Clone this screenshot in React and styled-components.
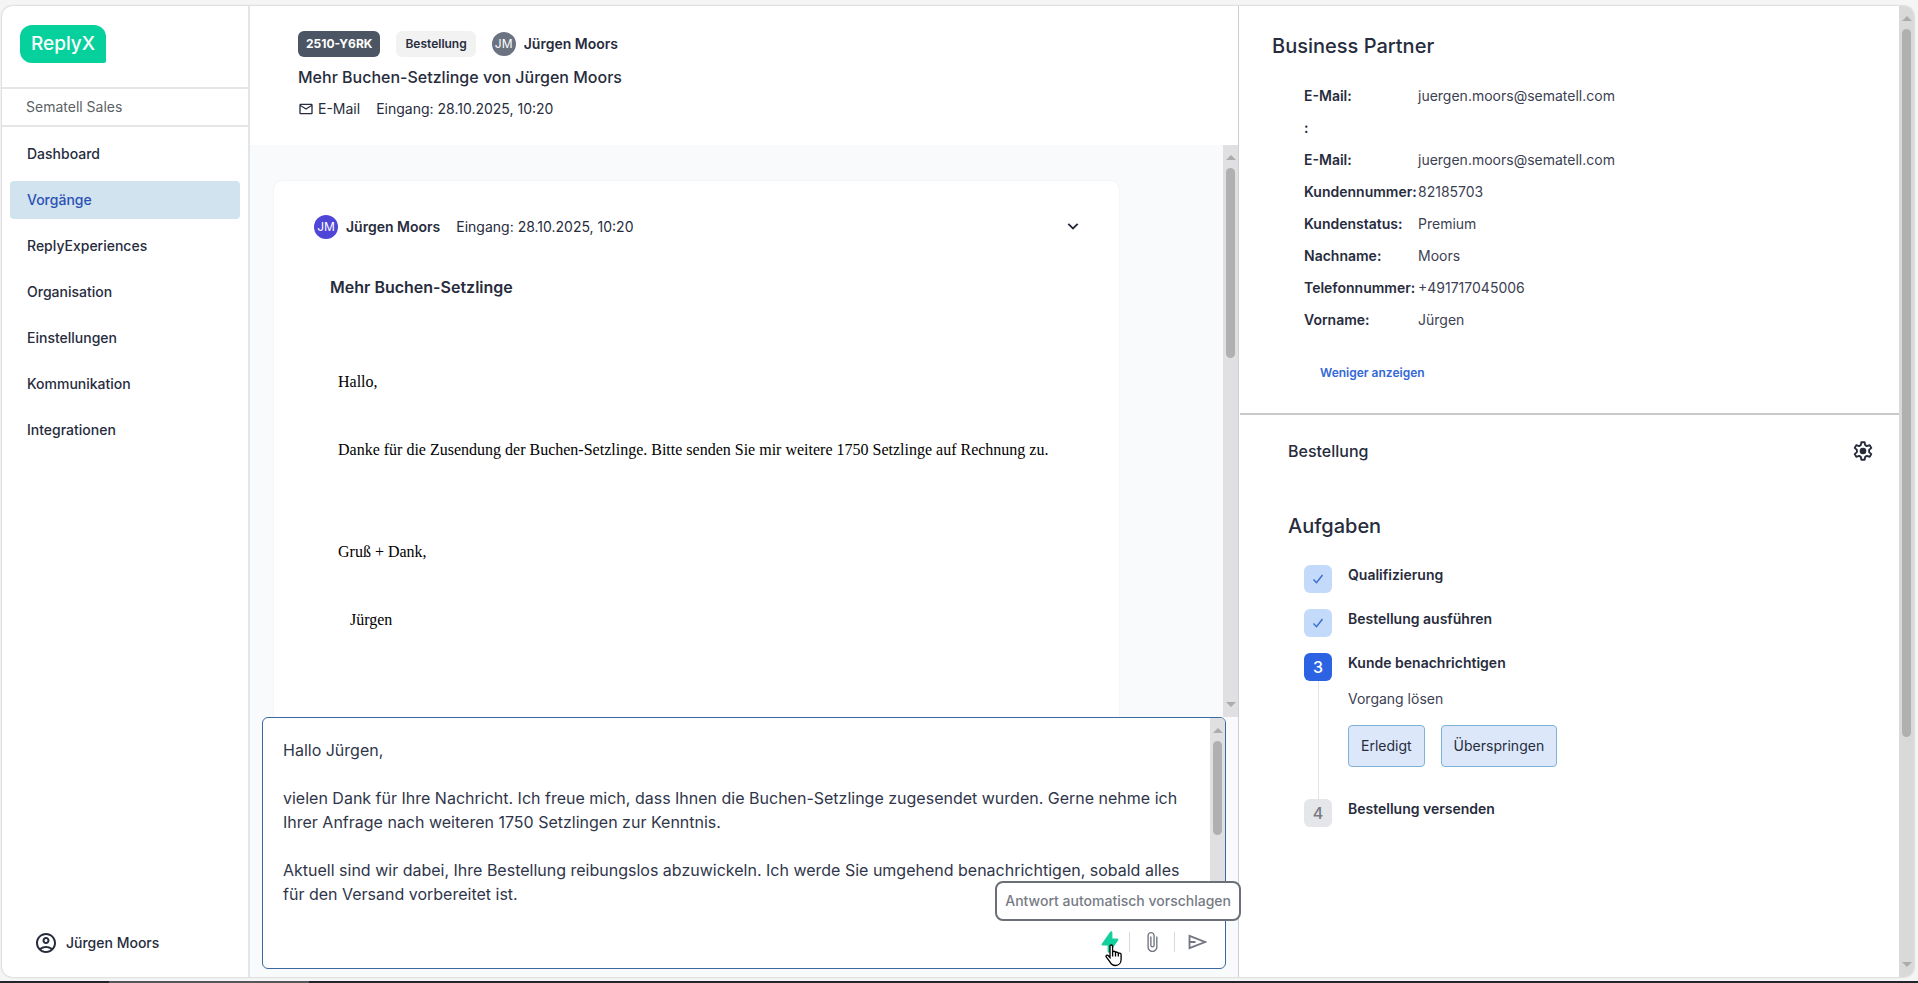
import React from 'react';
import styled, { createGlobalStyle, css } from 'styled-components';
import { HiLightningBolt } from 'react-icons/hi';
import {
  MdMailOutline,
  MdOutlineAccountCircle,
  MdOutlineAttachFile,
} from 'react-icons/md';

const GlobalStyle = createGlobalStyle`
  * {
    box-sizing: border-box;
  }
  body {
    margin: 0;
    background-color: #f5f5f5;
    color: #272c3d;
    font-family: Inter, "Liberation Sans", sans-serif;
    font-size: 14px;
    line-height: 20px;
  }
  h1, h2, h3, p, dl, dd, ol, ul {
    margin: 0;
    padding: 0;
  }
  ul, ol {
    list-style: none;
  }
  button {
    font: inherit;
    color: inherit;
    cursor: pointer;
  }
`;

const Page = styled.div`
  display: flex;
  flex-direction: column;
  height: 100vh;
`;
const Frame = styled.div`
  flex: 1;
  min-height: 0;
  margin: 6px 4px 4px 2px;
  display: grid;
  grid-template-columns: 248px minmax(0, 988fr) minmax(0, 676fr);
  border-radius: 10px;
  background-color: #fff;
  box-shadow: 0 0 2px rgba(0, 0, 0, 0.3);
  overflow: hidden;
`;
const Taskbar = styled.div`
  height: 2px;
  padding-left: 109px;
  background-color: #23252b;
`;
const TaskbarItem = styled.div`
  width: 200px;
  height: 2px;
  background-color: #55565a;
`;

/* sidebar */
const Sidebar = styled.aside`
  display: flex;
  flex-direction: column;
  border-right: 2px solid #e4e5e7;
`;
const LogoArea = styled.div`
  height: 83px;
  padding: 19px 18px 0;
  border-bottom: 2px solid #e4e5e7;
`;
const Logo = styled.div`
  display: flex;
  align-items: center;
  justify-content: center;
  width: 86px;
  height: 38px;
  border-radius: 12px 12px 2px 12px;
  background-color: #06d09c;
  color: #fff;
  font-size: 19px;
  font-weight: 500;
`;
const Tenant = styled.div`
  height: 38px;
  padding: 8px 24px;
  border-bottom: 2px solid #e4e5e7;
  color: #5b5f66;
`;
const Menu = styled.ul`
  display: flex;
  flex: 1;
  flex-direction: column;
  gap: 8px;
  padding: 8px;
`;
const MenuLink = styled.a`
  display: block;
  padding: 9px 17px;
  border-radius: 4px;
  font-weight: 500;
  text-decoration: none;
  color: ${({ $active }) => ($active ? '#2b50b5' : '#272c3d')};
  background-color: ${({ $active }) => ($active ? '#d1e3ee' : 'transparent')};
`;
const UserLink = styled.a`
  display: flex;
  align-items: center;
  gap: 8px;
  padding: 0 32px 22px;
  font-weight: 500;
  text-decoration: none;
  color: #272c3d;
`;

/* ticket */
const Ticket = styled.main`
  display: flex;
  flex-direction: column;
  min-height: 0;
  background-color: #f8fafc;
`;
const TicketHeader = styled.header`
  display: flex;
  flex-direction: column;
  height: 139px;
  padding: 25px 48px 0;
  background-color: #fff;
`;
const Row = styled.div`
  display: flex;
  align-items: center;
  gap: ${({ $gap }) => $gap || 16}px;
`;
const Badge = styled.span`
  height: 26px;
  padding: 0 9px;
  border-radius: 6px;
  font-size: 12px;
  font-weight: 600;
  line-height: 26px;
  background-color: #f2f2f3;
  ${({ $dark }) =>
    $dark &&
    css`
      padding: 0 8px;
      background-color: #4b5563;
      color: #fff;
      font-weight: 700;
    `}
`;
const Avatar = styled.span`
  display: flex;
  align-items: center;
  justify-content: center;
  width: 24px;
  height: 24px;
  border-radius: 50%;
  background-color: ${({ $color }) => $color};
  color: #fff;
  font-size: 12px;
`;
const PersonName = styled.span`
  font-weight: 600;
`;
const TicketTitle = styled.h1`
  margin: 8px 0 10px;
  font-size: 16px;
  font-weight: 500;
  line-height: 24px;
`;
const Conversation = styled.section`
  display: flex;
  flex: 1;
  min-height: 0;
`;
const Messages = styled.div`
  flex: 1;
  padding: 36px 104px 0 24px;
  overflow: hidden;
`;
const Message = styled.article`
  min-height: 600px;
  padding: 34px 36px 0 40px;
  border-radius: 8px;
  background-color: #fff;
  box-shadow: 0 0 2px rgba(0, 0, 0, 0.08);
`;
const MessageToggle = styled.button`
  display: flex;
  margin-left: auto;
  padding: 4px;
  border: none;
  background-color: transparent;
`;
const Subject = styled.h2`
  margin: 36px 16px 66px;
  font-size: 16px;
  font-weight: 600;
  line-height: 24px;
`;
const MailBody = styled.div`
  padding: 0 24px;
  color: #000;
  font-family: "Liberation Serif", serif;
  font-size: 16px;
  line-height: 34px;
  p {
    margin-bottom: 34px;
  }
  p.closing {
    margin-top: 68px;
  }
  p.signature {
    padding-left: 12px;
  }
`;

/* scrollbar */
const Track = styled.div`
  display: flex;
  flex-direction: column;
  align-items: center;
  flex: none;
  width: 15px;
  padding: 10px 0;
  background-color: ${({ $color }) => $color || '#e0e0e2'};
`;
const Arrow = styled.span`
  border: 5px solid transparent;
  ${({ $down }) =>
    $down
      ? 'margin-top: auto; border-bottom: none; border-top-color: #acacac;'
      : 'border-top: none; border-bottom-color: #acacac;'}
`;
const Thumb = styled.div`
  width: 9px;
  margin-top: 8px;
  border-radius: 5px;
  background-color: #b0b0b1;
`;

/* reply */
const Composer = styled.form`
  display: flex;
  flex-direction: column;
  height: 252px;
  margin: 0 12px 8px;
  border: 1px solid #3b689f;
  border-radius: 6px;
  background-color: #fff;
`;
const ComposerBody = styled.div`
  display: flex;
  flex: 1;
  min-height: 0;
  border-top-right-radius: 5px;
  overflow: hidden;
`;
const ReplyField = styled.textarea`
  flex: 1;
  padding: 20px 16px 0 20px;
  border: none;
  outline: none;
  resize: none;
  overflow: hidden;
  background-color: transparent;
  color: #30364a;
  font-family: inherit;
  font-size: 16px;
  line-height: 24px;
`;
const Tools = styled.div`
  display: flex;
  align-items: center;
  justify-content: flex-end;
  height: 52px;
  padding-right: 16px;
`;
const Tool = styled.button`
  position: relative;
  display: flex;
  align-items: center;
  justify-content: center;
  width: 24px;
  height: 24px;
  padding: 0;
  border: none;
  background-color: transparent;
  color: #737682;
  ${({ $accent }) =>
    $accent &&
    css`
      width: 18px;
      color: #12cf9c;
    `}
  svg {
    flex: none;
  }
`;
const ToolDivider = styled.span`
  width: 1px;
  height: 20px;
  margin: 0 10px;
  background-color: #d8d9dc;
`;
const Tooltip = styled.span`
  position: absolute;
  right: -122px;
  bottom: 33px;
  padding: 8px;
  border: 2px solid #6b7078;
  border-radius: 8px;
  background-color: #fff;
  color: #767b85;
  font-weight: 500;
  white-space: nowrap;
`;
const Pointer = styled.svg`
  position: absolute;
  left: 4px;
  top: 14px;
`;

/* details */
const Details = styled.aside`
  display: flex;
  min-height: 0;
  border-left: 1px solid #cfcfd1;
`;
const DetailsContent = styled.div`
  flex: 1;
  padding-left: 1px;
  overflow: hidden;
`;
const Partner = styled.section`
  padding: 26px 32px 24px;
  border-bottom: 2px solid #c9c9ca;
`;
const Heading = styled.h2`
  font-size: 20px;
  font-weight: 500;
  line-height: 28px;
`;
const Facts = styled.dl`
  margin: 20px 0 21px;
  padding-left: 32px;
`;
const Fact = styled.div`
  display: grid;
  grid-template-columns: 114px 1fr;
  align-items: center;
  height: 32px;
  dt {
    font-weight: 600;
    white-space: nowrap;
  }
  dd {
    color: #3c4152;
  }
`;
const LessButton = styled.button`
  height: 32px;
  margin-left: 32px;
  padding: 0 16px;
  border: none;
  background-color: transparent;
  color: #3268d6;
  font-size: 12px;
  font-weight: 600;
`;
const Process = styled.section`
  padding: 0 24px 0 48px;
`;
const ProcessHeader = styled.div`
  display: flex;
  align-items: center;
  justify-content: space-between;
  height: 72px;
  margin-bottom: 25px;
`;
const ProcessTitle = styled.h3`
  font-size: 16px;
  font-weight: 500;
`;
const IconButton = styled.button`
  display: flex;
  padding: 0;
  border: none;
  background-color: transparent;
`;
const Steps = styled.ol`
  padding: 25px 16px;
`;
const Step = styled.li`
  display: flex;
  gap: 16px;
`;
const StepMarker = styled.div`
  display: flex;
  flex-direction: column;
  align-items: center;
`;
const markerColors = {
  done: 'background-color: #c3dafa; color: #3a6fd0;',
  current: 'background-color: #2c63e2; color: #fff;',
  open: 'background-color: #e5e6ea; color: #777b85;',
};
const StepNumber = styled.span`
  display: flex;
  align-items: center;
  justify-content: center;
  width: 28px;
  height: 28px;
  border-radius: 6px;
  font-size: 16px;
  font-weight: 500;
  ${({ $state }) => markerColors[$state]}
`;
const StepLine = styled.span`
  flex: 1;
  width: 1px;
  background-color: ${({ $visible }) => ($visible ? '#e2e3e6' : 'transparent')};
`;
const StepContent = styled.div`
  display: flex;
  flex-direction: column;
  gap: 16px;
  min-height: 44px;
  padding-bottom: ${({ $open }) => ($open ? 32 : 0)}px;
`;
const StepTitle = styled.h4`
  margin: 0;
  font-size: 14px;
  font-weight: 600;
`;
const StepText = styled.p`
  color: #3c4152;
`;
const ActionButton = styled.button`
  height: 42px;
  padding: 0 12px;
  border: 1px solid #7fb2d9;
  border-radius: 4px;
  background-color: #dce8fa;
`;

const menu = [
  'Dashboard',
  'Vorgänge',
  'ReplyExperiences',
  'Organisation',
  'Einstellungen',
  'Kommunikation',
  'Integrationen',
];

const facts = [
  ['E-Mail', 'juergen.moors@sematell.com'],
  ['', ''],
  ['E-Mail', 'juergen.moors@sematell.com'],
  ['Kundennummer', '82185703'],
  ['Kundenstatus', 'Premium'],
  ['Nachname', 'Moors'],
  ['Telefonnummer', '+491717045006'],
  ['Vorname', 'Jürgen'],
];

const steps = [
  { title: 'Qualifizierung', state: 'done' },
  { title: 'Bestellung ausführen', state: 'done' },
  {
    title: 'Kunde benachrichtigen',
    state: 'current',
    text: 'Vorgang lösen',
    actions: ['Erledigt', 'Überspringen'],
  },
  { title: 'Bestellung versenden', state: 'open' },
];

const reply = `Hallo Jürgen,

vielen Dank für Ihre Nachricht. Ich freue mich, dass Ihnen die Buchen-Setzlinge zugesendet wurden. Gerne nehme ich Ihrer Anfrage nach weiteren 1750 Setzlingen zur Kenntnis.

Aktuell sind wir dabei, Ihre Bestellung reibungslos abzuwickeln. Ich werde Sie umgehend benachrichtigen, sobald alles für den Versand vorbereitet ist.`;

function GearIcon() {
  return (
    <svg width="24" height="24" viewBox="0 0 24 24" fill="none">
      <path
        d="M10.4 3.2h3.2l.6 2.9 1.7 1 2.8-1 1.6 2.8-2.2 2v2.2l2.2 2-1.6 2.8-2.8-1-1.7 1-.6 2.9h-3.2l-.6-2.9-1.7-1-2.8 1-1.6-2.8 2.2-2v-2.2l-2.2-2 1.6-2.8 2.8 1 1.7-1z"
        stroke="#272c3d"
        strokeWidth="1.9"
        strokeLinejoin="round"
      />
      <circle cx="12" cy="12" r="3.3" fill="#272c3d" />
    </svg>
  );
}

function CheckIcon() {
  return (
    <svg width="12" height="12" viewBox="0 0 12 12" fill="none">
      <path d="M1.5 6.5l3 3.2L10.5 2" stroke="currentColor" strokeWidth="1.5" />
    </svg>
  );
}

function ChevronIcon() {
  return (
    <svg width="12" height="12" viewBox="0 0 12 12" fill="none">
      <path d="M1.3 2.8L6 7.5l4.7-4.7" stroke="currentColor" strokeWidth="1.8" />
    </svg>
  );
}

function SendIcon() {
  return (
    <svg width="20" height="16" viewBox="0 0 20 16" fill="none">
      <path
        d="M2.5 1.8L18 8 2.5 14.2zM2.5 8h6"
        stroke="currentColor"
        strokeWidth="1.8"
      />
    </svg>
  );
}

function PointerIcon() {
  return (
    <Pointer width="19" height="23" viewBox="0 0 19 23">
      <path
        d="M5 2.2C5 .6 7.6.6 7.6 2.2v6c0-1.3 2.7-1.3 2.9 0v.7c.2-1.2 2.6-1.2 2.8.2v.8c.3-1.1 2.6-1 2.8.6v5.1c0 3-2 5.9-5.6 5.9-3 0-4.4-1.4-5.6-3.6L1.2 13c-.8-1.5 1-2.6 2.2-1.3L5 13.5z"
        fill="#fff"
        stroke="#000"
        strokeWidth="1.3"
      />
      <path
        d="M7.6 8v4.5M10.5 8.5v4M13.3 9.5v3"
        stroke="#000"
        strokeWidth="1.3"
      />
    </Pointer>
  );
}

function Scrollbar({ size, color }) {
  return (
    <Track $color={color} aria-hidden="true">
      <Arrow />
      <Thumb style={{ height: size }} />
      <Arrow $down />
    </Track>
  );
}

function App() {
  const renderSidebar = () => (
    <Sidebar>
      <LogoArea>
        <Logo>ReplyX</Logo>
      </LogoArea>
      <Tenant>Sematell Sales</Tenant>
      <Menu>
        {menu.map(item => (
          <li key={item}>
            <MenuLink href="#" $active={item === 'Vorgänge'}>
              {item}
            </MenuLink>
          </li>
        ))}
      </Menu>
      <UserLink href="#">
        <MdOutlineAccountCircle size={24} />
        Jürgen Moors
      </UserLink>
    </Sidebar>
  );

  const renderComposer = () => (
    <Composer>
      <ComposerBody>
        <ReplyField aria-label="Antwort" spellCheck={false} defaultValue={reply} />
        <Scrollbar size={94} />
      </ComposerBody>
      <Tools>
        <Tool type="button" $accent aria-label="Antwort automatisch vorschlagen">
          <HiLightningBolt size={24} />
          <Tooltip role="tooltip">Antwort automatisch vorschlagen</Tooltip>
          <PointerIcon />
        </Tool>
        <ToolDivider />
        <Tool type="button" aria-label="Anhang">
          <MdOutlineAttachFile size={22} />
        </Tool>
        <ToolDivider />
        <Tool type="submit" aria-label="Senden">
          <SendIcon />
        </Tool>
      </Tools>
    </Composer>
  );

  const renderDetails = () => (
    <Details>
      <DetailsContent>
        <Partner>
          <Heading>Business Partner</Heading>
          <Facts>
            {facts.map(([label, value], index) => (
              <Fact key={index}>
                <dt>{label}:</dt>
                <dd>{value}</dd>
              </Fact>
            ))}
          </Facts>
          <LessButton type="button">Weniger anzeigen</LessButton>
        </Partner>
        <Process>
          <ProcessHeader>
            <ProcessTitle>Bestellung</ProcessTitle>
            <IconButton type="button" aria-label="Einstellungen">
              <GearIcon />
            </IconButton>
          </ProcessHeader>
          <Heading>Aufgaben</Heading>
          <Steps>
            {steps.map((step, index) => (
              <Step key={step.title}>
                <StepMarker>
                  <StepNumber $state={step.state}>
                    {step.state === 'done' ? <CheckIcon /> : index + 1}
                  </StepNumber>
                  <StepLine $visible={step.state === 'current'} />
                </StepMarker>
                <StepContent $open={Boolean(step.actions)}>
                  <StepTitle>{step.title}</StepTitle>
                  {step.text && <StepText>{step.text}</StepText>}
                  {step.actions && (
                    <Row>
                      {step.actions.map(action => (
                        <ActionButton key={action} type="button">
                          {action}
                        </ActionButton>
                      ))}
                    </Row>
                  )}
                </StepContent>
              </Step>
            ))}
          </Steps>
        </Process>
      </DetailsContent>
      <Scrollbar size={708} color="#d9d9d9" />
    </Details>
  );

  return (
    <Page>
      <GlobalStyle />
      <Frame>
        {renderSidebar()}
        <Ticket>
          <TicketHeader>
            <Row>
              <Badge $dark>2510-Y6RK</Badge>
              <Badge>Bestellung</Badge>
              <Row $gap={8}>
                <Avatar $color="#6b7280">JM</Avatar>
                <PersonName>Jürgen Moors</PersonName>
              </Row>
            </Row>
            <TicketTitle>Mehr Buchen-Setzlinge von Jürgen Moors</TicketTitle>
            <Row>
              <Row $gap={4}>
                <MdMailOutline size={16} />
                <span>E-Mail</span>
              </Row>
              <span>Eingang: 28.10.2025, 10:20</span>
            </Row>
          </TicketHeader>
          <Conversation>
            <Messages>
              <Message>
                <Row>
                  <Row $gap={8}>
                    <Avatar $color="#4f46d8">JM</Avatar>
                    <PersonName>Jürgen Moors</PersonName>
                  </Row>
                  <span>Eingang: 28.10.2025, 10:20</span>
                  <MessageToggle type="button" aria-label="Einklappen">
                    <ChevronIcon />
                  </MessageToggle>
                </Row>
                <Subject>Mehr Buchen-Setzlinge</Subject>
                <MailBody>
                  <p>Hallo,</p>
                  <p>
                    Danke für die Zusendung der Buchen-Setzlinge. Bitte senden
                    Sie mir weitere 1750 Setzlinge auf Rechnung zu.
                  </p>
                  <p className="closing">Gruß + Dank,</p>
                  <p className="signature">Jürgen</p>
                </MailBody>
              </Message>
            </Messages>
            <Scrollbar size={190} />
          </Conversation>
          {renderComposer()}
        </Ticket>
        {renderDetails()}
      </Frame>
      <Taskbar>
        <TaskbarItem />
      </Taskbar>
    </Page>
  );
}

export default App;
